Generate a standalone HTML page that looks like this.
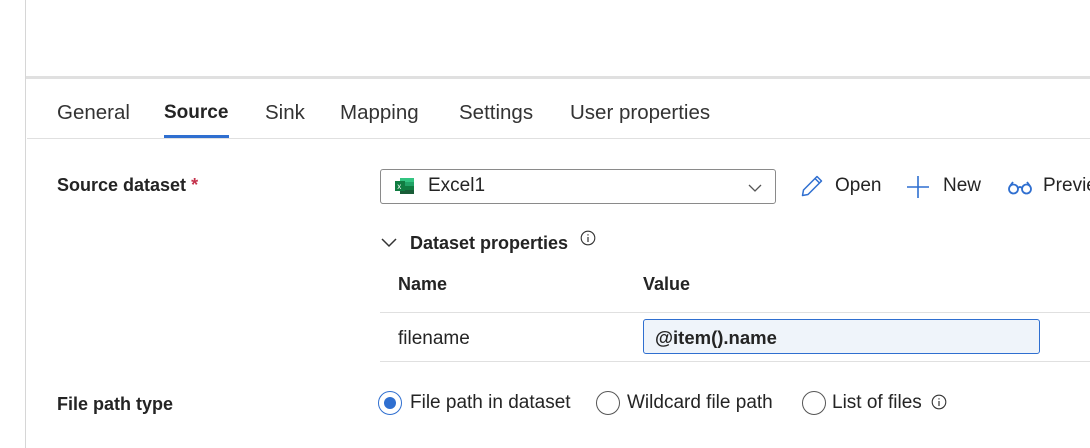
<!DOCTYPE html>
<html><head><meta charset="utf-8"><style>
*{margin:0;padding:0;box-sizing:border-box}
body{width:1090px;height:448px;overflow:hidden;background:#fff;font-family:"Liberation Sans",sans-serif;color:#242424;position:relative}
.a{position:absolute;white-space:nowrap}
.tab{font-size:20.5px;top:101px;color:#333}
.lbl{font-size:18px;font-weight:bold;color:#242424}
.t17{font-size:19px}
.radio{position:absolute;width:24px;height:24px;border:1.5px solid #555;border-radius:50%}
</style></head><body>
<div class="a" style="left:25px;top:0;width:1px;height:448px;background:#d6d6d6"></div>
<div class="a" style="left:26px;top:76px;width:1064px;height:3px;background:#e0e0e0"></div>
<div class="a tab" style="left:57px">General</div>
<div class="a tab" style="left:164px;font-weight:bold;color:#242424;font-size:19px;top:102px">Source</div>
<div class="a" style="left:164px;top:135px;width:65px;height:3px;background:#2f6fd0"></div>
<div class="a tab" style="left:265px">Sink</div>
<div class="a tab" style="left:340px">Mapping</div>
<div class="a tab" style="left:459px">Settings</div>
<div class="a tab" style="left:570px">User properties</div>
<div class="a" style="left:27px;top:138px;width:1063px;height:1px;background:#e0e0e0"></div>

<div class="a lbl" style="left:57px;top:175px">Source dataset <span style="color:#c4314b">*</span></div>
<div class="a" style="left:380px;top:169px;width:396px;height:35px;border:1px solid #8a8a8a;border-radius:3px"></div>
<svg class="a" style="left:394px;top:177px" width="22" height="18" viewBox="0 0 22 18"><rect x="6" y="1" width="14" height="4" fill="#33c481"/><rect x="6" y="5" width="14" height="4" fill="#21a366"/><rect x="6" y="9" width="14" height="4" fill="#107c41"/><rect x="6" y="13" width="14" height="4" fill="#185c37"/><rect x="1" y="4" width="10" height="10" fill="#107c41"/><text x="3.2" y="12" font-size="8" fill="#fff" font-family="Liberation Sans">x</text></svg>
<div class="a t17" style="left:428px;top:175px">Excel1</div>
<svg class="a" style="left:748px;top:184px" width="14" height="9" viewBox="0 0 14 9"><path d="M1 1l6 6 6-6" fill="none" stroke="#555" stroke-width="1.3"/></svg>
<svg class="a" style="left:800px;top:174px" width="24" height="24" viewBox="0 0 24 24"><path d="M17 2.5l4.5 4.5L8 20.5l-5.5 1 1-5.5z M15 4.5l4.5 4.5" fill="none" stroke="#2f6fd0" stroke-width="1.5" stroke-linejoin="round"/></svg>
<div class="a t17" style="left:835px;top:175px">Open</div>
<svg class="a" style="left:906px;top:175px" width="24" height="24" viewBox="0 0 24 24"><path d="M12 1v22M1 12h22" stroke="#2f6fd0" stroke-width="1.6"/></svg>
<div class="a t17" style="left:943px;top:175px">New</div>
<svg class="a" style="left:1007px;top:178px" width="26" height="18" viewBox="0 0 26 18"><circle cx="6.5" cy="11" r="4.5" fill="none" stroke="#2f6fd0" stroke-width="1.8"/><circle cx="19.5" cy="11" r="4.5" fill="none" stroke="#2f6fd0" stroke-width="1.8"/><path d="M11 10q2-2 4 0M3 8L6 4M23 8l-3-4" fill="none" stroke="#2f6fd0" stroke-width="1.8"/></svg>
<div class="a t17" style="left:1043px;top:175px">Preview</div>

<svg class="a" style="left:381px;top:238px" width="16" height="10" viewBox="0 0 16 10"><path d="M1 1l7 7 7-7" fill="none" stroke="#333" stroke-width="1.5"/></svg>
<div class="a lbl" style="left:410px;top:233px">Dataset properties</div>
<svg class="a" style="left:580px;top:230px" width="16" height="16" viewBox="0 0 16 16"><circle cx="8" cy="8" r="6.8" fill="none" stroke="#333" stroke-width="1.1"/><path d="M8 7v5M8 4.2v1.3" stroke="#333" stroke-width="1.2"/></svg>
<div class="a lbl" style="left:398px;top:274px">Name</div>
<div class="a lbl" style="left:643px;top:274px">Value</div>
<div class="a" style="left:380px;top:312px;width:710px;height:1px;background:#e0e0e0"></div>
<div class="a t17" style="left:398px;top:328px">filename</div>
<div class="a" style="left:643px;top:319px;width:397px;height:35px;border:1px solid #2f6fd0;border-radius:3px;background:#eff4fa"></div>
<div class="a lbl" style="left:655px;top:327px;font-size:18.5px">@item().name</div>
<div class="a" style="left:380px;top:361px;width:710px;height:1px;background:#e0e0e0"></div>

<div class="a lbl" style="left:57px;top:394px">File path type</div>
<div class="radio" style="left:378px;top:391px;border-color:#2f6fd0"></div>
<div class="a" style="left:384px;top:397px;width:12px;height:12px;border-radius:50%;background:#2f6fd0"></div>
<div class="a t17" style="left:410px;top:392px">File path in dataset</div>
<div class="radio" style="left:596px;top:391px"></div>
<div class="a t17" style="left:627px;top:392px">Wildcard file path</div>
<div class="radio" style="left:802px;top:391px"></div>
<div class="a t17" style="left:832px;top:392px">List of files</div>
<svg class="a" style="left:931px;top:394px" width="16" height="16" viewBox="0 0 16 16"><circle cx="8" cy="8" r="6.8" fill="none" stroke="#333" stroke-width="1.1"/><path d="M8 7v5M8 4.2v1.3" stroke="#333" stroke-width="1.2"/></svg>
</body></html>
